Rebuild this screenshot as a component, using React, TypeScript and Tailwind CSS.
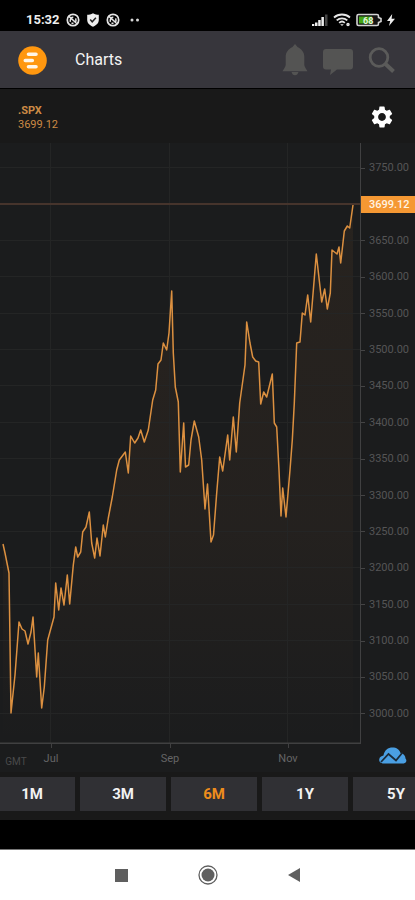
import { MdSettings } from "react-icons/md";

const prices = [
  3750, 3700, 3650, 3600, 3550, 3500, 3450, 3400, 3350, 3300, 3250, 3200, 3150, 3100, 3050, 3000,
];
const lastPrice = "3699.12";
const ranges = ["1M", "3M", "6M", "1Y", "5Y"];
const months = [51, 170, 288];

const series =
  "3,544 5,553 9,573 11,713 15,675 19,622 22,629 25,631 28,644 31,632 33,617 36.7,677 38.3,653 41.7,708 44.3,687 47.7,640 54,617 55.7,583 58.7,610 61,588 64,605 67.3,575 69.7,604 73.3,565 75.7,547 77.7,557 80.7,552 82.7,532 86,527 89.3,512 91.7,543 94.7,558 97,538 100,556 103.3,525 105.3,537 108.3,518 112.3,497 116.7,470 119.3,460 125.3,452 128.3,473 130.7,436 134.7,443 138,438 140.7,430 144.3,442 148.3,430 152.7,400 155.7,390 158,364 161,360 163.3,343 166.7,350 169,333 171.7,291 173.3,353 175.3,387 178.3,402 180.3,472 183.7,423 185.5,467 188.7,465 191,440 194.3,421 198.7,437 201.7,460 205,509 207.5,484 211,542 213.5,535 216.7,493 219.7,457 222.7,471 227.7,435 229.7,460 233.3,417 236.3,452 239.7,403 245,365 246.7,322 250,343 252.7,357 255.7,361 258.7,362 260.7,404 263.7,392 266.7,397 272.3,374 274.3,423 276.7,427 279,470 281,516 282.7,488 286,517 290,470 292.3,440 294.3,403 296.7,343 300,342 302.3,313 305,315 307.7,295 310.7,322 316.3,254 321.7,302 324.7,289 327.3,309 330.3,293 332,250 337,254 339,247 340.7,263 344.3,231 347.3,226 349.7,228 353,205";

const rowY = (i: number) => 168 + i * 36.4;

function MutedBadge() {
  return (
    <svg className="size-[14px]" viewBox="0 0 14 14" fill="none" stroke="#e4e4e4" aria-hidden="true">
      <circle cx="7" cy="7" r="5.7" strokeWidth="1.7" />
      <path d="M3 3.4l8 7.4M4.3 8.8c-.4-3 1-4.600 3-4.600M9.700 5.400c.5 2 .3 3-.2 3.600M5.500 10.300h2" strokeWidth="1.500" />
    </svg>
  );
}

function StatusBar() {
  return (
    <div className="flex h-[31px] items-center justify-between bg-black pt-2 pr-5 pl-[26px]">
      <div className="flex items-center gap-[6px]">
        <span className="text-[13px] leading-4 font-bold text-[#eeeeee]">15:32</span>
        <MutedBadge />
        <svg className="size-[14px]" viewBox="0 0 14 14" aria-hidden="true">
          <path d="M7 .3c2 1 4 1.500 5.800 1.500v5.200c0 3-2.500 5.500-5.800 6.800C3.700 12.500 1.200 10 1.200 7V1.800C3 1.800 5 1.300 7 .3z" fill="#eeeeee" />
          <path d="M4.200 6.600l2 2.200 3.700-4" fill="none" stroke="#222" strokeWidth="1.500" />
        </svg>
        <MutedBadge />
        <svg className="ml-1 h-3 w-[10px]" viewBox="0 0 10 12" fill="#d8d8d8" aria-hidden="true">
          <circle cx="2" cy="6" r="1.500" />
          <circle cx="7.500" cy="6" r="1.500" />
        </svg>
      </div>
      <div className="flex items-center gap-[5px]">
        <svg className="h-3 w-4" viewBox="0 0 16 12" aria-hidden="true">
          <path d="M0 12v-2h2.300v2zM3 12V8.500h2.500V12zM6.200 12V6h2.500v6zM9.400 12V3h2.500v9z" fill="#eeeeee" />
          <path d="M13 12V.5h2.500V12z" fill="#454545" />
        </svg>
        <svg className="h-[14px] w-[18px]" viewBox="0 0 18 14" fill="none" stroke="#e6e6e6" strokeWidth="1.800" aria-hidden="true">
          <path d="M1 4.500c4.500-4 11.500-4 16 0M3.700 7.300c3-2.700 7.600-2.700 10.600 0M6.200 9.800c1.600-1.500 4-1.500 5.600 0" />
          <path d="M7.200 11.200h3.600L9 13z" fill="#e6e6e6" stroke="none" />
          <circle cx="15" cy="11.500" r="1" strokeWidth="1.500" />
        </svg>
        <svg className="h-[14px] w-[26px]" viewBox="0 0 26 14" aria-hidden="true">
          <path d="M2.500 1.500h18.500q1.500 0 1.500 1.500v1.500l2.500 1v3l-2.500 1V11q0 1.500-1.500 1.500H2.500Q1 12.500 1 11V3q0-1.500 1.500-1.500z" fill="#151515" stroke="#d4d4d4" strokeWidth="1.600" />
          <path d="M3 3.500h13v7H3z" fill="#43a516" />
          <text x="7" y="10.500" fontSize="9" fontWeight="700" fill="#e8f5dd">68</text>
        </svg>
        <svg className="h-3 w-2" viewBox="0 0 8 12" fill="#ededed" aria-hidden="true">
          <path d="M5.200 0L0 7h3.200L2 12l6-7.200H4.600z" />
        </svg>
      </div>
    </div>
  );
}

function Header() {
  return (
    <header className="flex h-[58px] items-center border-b border-black bg-[#37363c] pt-px pr-5 pl-[18px]">
      <button type="button" aria-label="Menu" className="mr-7">
        <svg className="size-[29px]" viewBox="0 0 29 29">
          <circle cx="14.500" cy="14.500" r="14.300" fill="#ff970f" />
          <path d="M10.500 8.300h7.500M7.300 14.500h7M10.500 20.700h7.500" stroke="#fff6e8" strokeWidth="3.600" strokeLinecap="round" />
        </svg>
      </button>
      <h1 className="flex-1 text-[16px] leading-6 text-[#f4f4f4]">Charts</h1>
      <div className="flex items-center gap-[15px]">
        <button type="button" aria-label="Alerts">
          <svg className="h-8 w-[26px]" viewBox="0 0 26 32" fill="#545453">
            <path d="M13 0L15.500 3C19.500 5 22.300 8 22.300 13v8c.5 2.500 2 4 3.200 6.300H.5C1.700 25 3.200 23.500 3.700 21v-8C3.700 8 6.500 5 10.500 3zM9.500 28h7c-.5 2-1.800 3.300-3.500 3.300S10 30 9.500 28z" />
          </svg>
        </button>
        <button type="button" aria-label="Messages">
          <svg className="h-8 w-[30px]" viewBox="0 0 30 32" fill="#545453">
            <path d="M3 5h24Q30 5 30 8v14.500q0 3-3 3H14L7 31l1-5.500H3Q0 25.500 0 22.500V8Q0 5 3 5z" />
          </svg>
        </button>
        <button type="button" aria-label="Search">
          <svg className="h-[26px] w-[27px]" viewBox="0 0 27 26" fill="none" stroke="#5b5b5a">
            <circle cx="11" cy="10.500" r="8.800" strokeWidth="2.800" />
            <path d="M17.500 17L25.500 24.500" strokeWidth="4" />
          </svg>
        </button>
      </div>
    </header>
  );
}

function Plot() {
  return (
    <svg className="h-full w-full" viewBox="0 143 361 601" preserveAspectRatio="none" role="img" aria-label=".SPX price, six months">
      <defs>
        <linearGradient id="area" gradientUnits="userSpaceOnUse" x1="0" y1="204" x2="0" y2="744">
          <stop offset="0" stopColor="#f0913a" stopOpacity="0.06" />
          <stop offset="0.600" stopColor="#d08040" stopOpacity="0.050" />
          <stop offset="1" stopColor="#d08040" stopOpacity="0" />
        </linearGradient>
      </defs>
      <polygon points={`${series} 353,744 3,744`} fill="url(#area)" />
      <g stroke="#242525" strokeWidth="1">
        {prices.map((p, i) => (
          <line key={p} x1="0" x2="361" y1={Math.round(rowY(i)) - 0.5} y2={Math.round(rowY(i)) - 0.5} />
        ))}
        {months.map((x) => (
          <line key={x} x1={x - 0.5} x2={x - 0.5} y1="143" y2="744" />
        ))}
      </g>
      <line x1="0" x2="361" y1="204" y2="204" stroke="#46342c" strokeWidth="2" />
      <polyline points={series} fill="none" stroke="#dc9040" strokeWidth="1.500" strokeLinejoin="round" vectorEffect="non-scaling-stroke" />
      <path d="M0 743.500H361M361 143V744" stroke="#404041" strokeWidth="2" />
    </svg>
  );
}

function Tick() {
  return <span className="mx-auto block h-1 w-px bg-[#404041]" />;
}

function Chart() {
  return (
    <section className="flex flex-1 flex-col bg-[#1b1c1d]">
      <div className="flex min-h-[480px] flex-1">
        <div className="relative min-w-0 flex-1">
          <div className="absolute inset-0">
            <Plot />
          </div>
        </div>
        <ol className="flex w-[54px] flex-col pt-[7px] pb-3 text-[11px] leading-4 text-[#555556]">
          {prices.map((p) =>
            p === 3700 ? (
              <li key={p} className="flex min-h-0 flex-1 items-center">
                <span className="h-[17px] w-full bg-[#f59833] pl-2 leading-[17px] font-medium text-[#fff3e3]">{lastPrice}</span>
              </li>
            ) : (
              <li key={p} className="flex min-h-0 flex-1 items-center gap-1">
                <span className="h-px w-1 bg-[#444445]" />
                {p}.00
              </li>
            ),
          )}
        </ol>
      </div>
      <div className="flex h-7 text-[11px] leading-4 text-[#656566]">
        <div className="grid flex-1 grid-cols-[28fr_46fr_192fr_44fr_51fr] text-center">
          <span className="pt-[10px] pl-1 text-[10px] text-[#4a4a4b]">GMT</span>
          {["Jul", "Sep", "Nov"].map((m) => (
            <div key={m}>
              <Tick />
              <span className="block pt-[3px]">{m}</span>
            </div>
          ))}
        </div>
        <div className="w-[54px] pt-px pl-[18px]">
          <svg className="h-[22px] w-[28px]" viewBox="0 0 28 22" role="img" aria-label="TradingView">
            <path d="M5 18.500C1.500 18.500 0 16.500.2 14.500.5 12 2.500 10.800 4.500 10.500 5.500 5 9 2.500 13.500 2.500c4 0 7 2 8 5.500 3.500.5 5 3.500 5 5.500 1.500 1.500 1.500 5-3 5z" fill="#4a9fe3" />
            <path d="M2 17L9.500 9l7.500 6.500 6.500-8" fill="none" stroke="#1b2a38" strokeWidth="1.800" />
          </svg>
        </div>
      </div>
    </section>
  );
}

export default function App() {
  return (
    <div className="flex min-h-screen flex-col overflow-hidden bg-[#191919] font-[Roboto,'Noto_Sans',sans-serif]">
      <StatusBar />
      <Header />
      <div className="flex h-[54px] items-start justify-between pt-[15px] pr-5 pl-[18px]">
        <div className="text-[11px] leading-[14px] text-[#cc8a45]">
          <p className="font-bold">.SPX</p>
          <p>{lastPrice}</p>
        </div>
        <button type="button" aria-label="Chart settings">
          <MdSettings className="size-[26px] text-white" />
        </button>
      </div>
      <Chart />
      <div className="flex h-12 items-start gap-[5px] overflow-hidden pt-[5px]">
        {ranges.map((r) => (
          <button
            key={r}
            type="button"
            aria-pressed={r === "6M"}
            className={
              "h-[34px] w-[86px] shrink-0 bg-[#303034] text-[15px] leading-5 font-bold first:-ml-[11px] " +
              (r === "6M" ? "text-[#ee8d1c]" : "text-[#f2f2f2]")
            }
          >
            {r}
          </button>
        ))}
      </div>
      <div className="h-[30px] border-b border-[#777777] bg-black" />
      <nav className="flex h-[50px] items-center justify-center bg-white">
        <button type="button" aria-label="Recent apps" className="flex w-[86px] justify-center">
          <span className="size-[13px] bg-[#5f5f5f]" />
        </button>
        <button type="button" aria-label="Home" className="flex w-[86px] justify-center">
          <svg className="size-5" viewBox="0 0 20 20">
            <circle cx="10" cy="10" r="9" fill="none" stroke="#5f5f5f" strokeWidth="1.300" />
            <circle cx="10" cy="10" r="6.500" fill="#5f5f5f" />
          </svg>
        </button>
        <button type="button" aria-label="Back" className="flex w-[86px] justify-center">
          <svg className="size-[14px]" viewBox="0 0 14 14" fill="#5f5f5f">
            <path d="M13 0v14L1 7z" />
          </svg>
        </button>
      </nav>
    </div>
  );
}
